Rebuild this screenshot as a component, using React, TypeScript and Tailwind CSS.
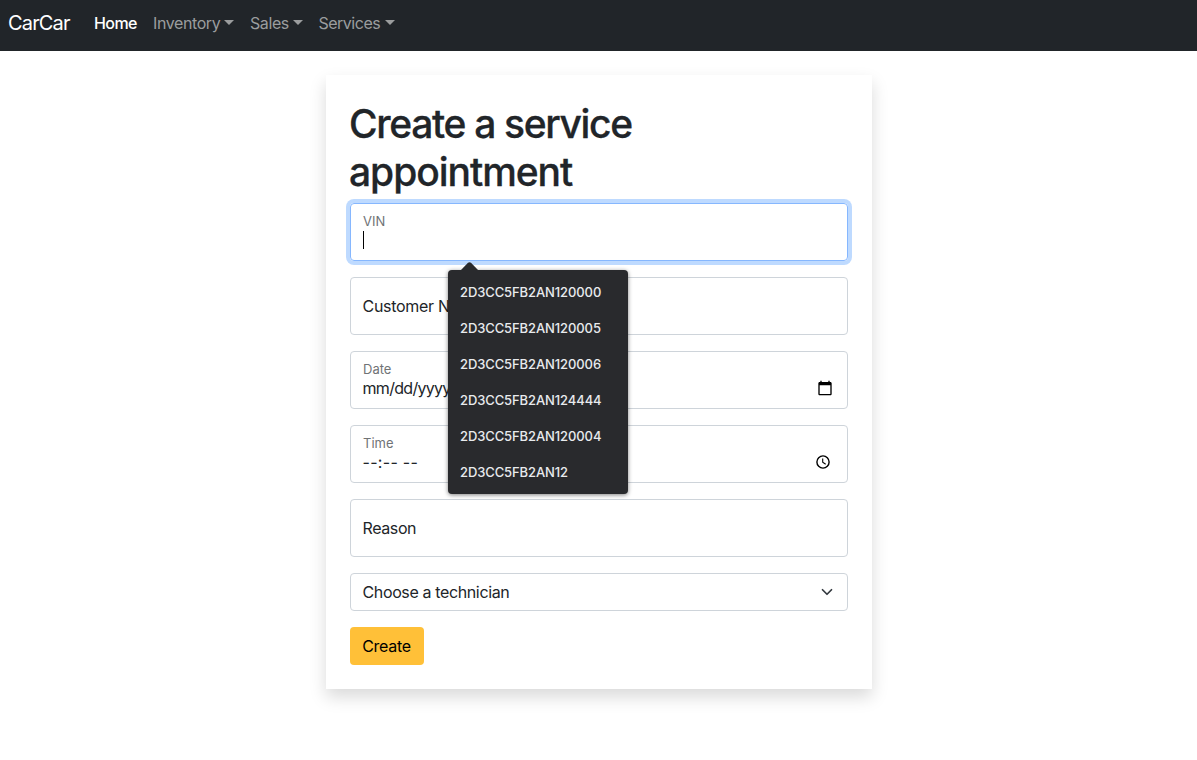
import type { ReactNode } from "react";

const suggestions = [
  "2D3CC5FB2AN120000",
  "2D3CC5FB2AN120005",
  "2D3CC5FB2AN120006",
  "2D3CC5FB2AN124444",
  "2D3CC5FB2AN120004",
  "2D3CC5FB2AN12",
];

function NavDropdown({ label, tracking }: { label: string; tracking: string }) {
  return (
    <a className="flex items-center px-2 text-[#9b9d9e]">
      <span className={tracking}>{label}</span>
      <span className="mb-px ml-1 h-0 w-0 border-x-[5px] border-t-[5px] border-x-transparent border-t-[#9b9d9e]" />
    </a>
  );
}

function Field({ children, className = "" }: { children: ReactNode; className?: string }) {
  return (
    <div className={`relative mb-4 h-[58px] rounded-[4px] border pr-3 pl-[11.5px] ${className || "border-[#ced4da]"}`}>
      {children}
    </div>
  );
}

function SmallLabel({ children }: { children: ReactNode }) {
  return <div className="pt-2 pl-[0.5px] text-[13px] leading-[19px] text-[#707376]">{children}</div>;
}

function Suggestions() {
  return (
    <div className="absolute top-[58px] left-[97px] z-10 w-[180px]">
      <svg className="ml-[13px] block" width="18" height="8" viewBox="0 0 18 8">
        <path d="M0 8 7 .7Q8.500 -.4 10 .7L17 8Z" fill="#292a2d" />
      </svg>
      <ul className="h-[224px] rounded-[4px] bg-[#292a2d] pt-[5px] shadow-[0_1px_4px_rgba(0,0,0,0.5)]">
        {suggestions.map((vin) => (
          <li key={vin} className="flex h-9 items-center px-3 text-[13px] font-medium tracking-[-0.1px] text-[#e8eaed]">
            {vin}
          </li>
        ))}
      </ul>
    </div>
  );
}

export default function App() {
  return (
    <div className="min-h-[760px] bg-white font-['Inter','Liberation_Sans',sans-serif] text-base text-[#212529]">
      <nav className="flex h-[51px] items-center bg-[#212529] px-2 pb-[5px]">
        <a className="mr-4 w-[62px] text-[20px] tracking-[-0.85px] text-white">CarCar</a>
        <a className="w-[59px] px-2 font-medium tracking-[-0.6px] text-white">Home</a>
        <NavDropdown label="Inventory" tracking="w-[67px] tracking-[-0.4px]" />
        <NavDropdown label="Sales" tracking="w-[38.5px] tracking-[-0.4px]" />
        <NavDropdown label="Services" tracking="w-[62px] tracking-[-0.5px]" />
      </nav>
      <main className="ml-[326px] mt-6 h-[614px] w-[546px] bg-white p-6 shadow-[0_8px_16px_rgba(0,0,0,0.15)]">
        <h1 className="-ml-px mb-[7px] pt-px text-[39px] font-medium leading-[48px] [-webkit-text-stroke:0.3px_#212529]">
          <span className="block tracking-[-1.35px]">Create a service</span>
          <span className="block tracking-[-1.05px]">appointment</span>
        </h1>
        <Field className="border-[#86b7fe] shadow-[0_0_0_4px_#bedaff]">
          <SmallLabel>VIN</SmallLabel>
          <div className="ml-[0.5px] h-[18px] w-px bg-black" />
          <Suggestions />
        </Field>
        <Field>
          <div className="leading-[56px] tracking-[-0.3px]">Customer Name</div>
        </Field>
        <Field>
          <SmallLabel>Date</SmallLabel>
          <div className="flex items-center justify-between leading-[19px]">
            <span className="tracking-[-0.7px]">mm/dd/yyyy</span>
            <svg className="mr-[2px] mb-[2px]" width="16" height="16" viewBox="0 0 24 24">
              <path
                d="M20 3h-1V1h-2v2H7V1H5v2H4c-1.1 0-2 .9-2 2v16c0 1.1.9 2 2 2h16c1.1 0 2-.9 2-2V5c0-1.100-.9-2-2-2zm0 18H4V8h16v13z"
                fill="#000"
              />
            </svg>
          </div>
        </Field>
        <Field>
          <SmallLabel>Time</SmallLabel>
          <div className="flex items-center justify-between leading-[19px]">
            <span className="tracking-[0.3px]">--:-- --</span>
            <svg className="mr-1 mb-[2px]" width="16" height="16" viewBox="0 0 16 16" fill="none" stroke="#000">
              <circle cx="8" cy="8" r="6.1" strokeWidth="1.4" />
              <path d="M7.700 4.500V8.300L10.700 10.200" strokeWidth="1.1" />
            </svg>
          </div>
        </Field>
        <Field>
          <div className="leading-[56px] tracking-[-0.4px]">Reason</div>
        </Field>
        <div className="mb-4 flex h-[38px] items-center justify-between rounded-[4px] border border-[#ced4da] pr-3 pl-[11.5px]">
          <span className="tracking-[-0.37px]">Choose a technician</span>
          <svg width="16" height="12" viewBox="0 0 16 16">
            <path d="m2 5 6 6 6-6" fill="none" stroke="#343a40" strokeWidth="2.3" strokeLinecap="round" strokeLinejoin="round" />
          </svg>
        </div>
        <button className="h-[38px] w-[74px] rounded-[4px] bg-[#ffc038] pr-px tracking-[-0.3px] text-black">Create</button>
      </main>
    </div>
  );
}
